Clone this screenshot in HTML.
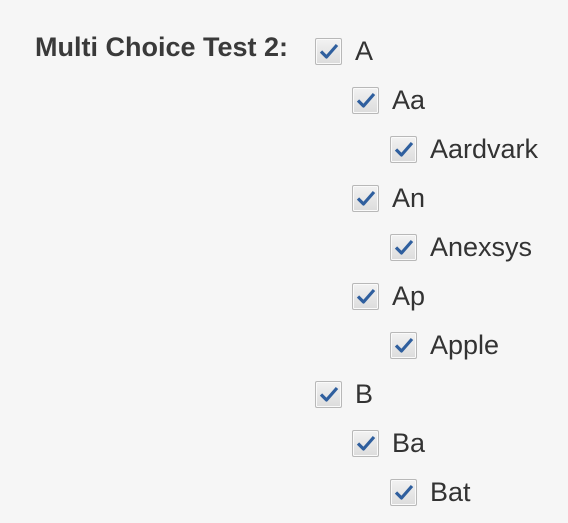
<!DOCTYPE html>
<html><head><style>
body{margin:0;background:#f6f6f6;width:568px;height:523px;overflow:hidden;font-family:"Liberation Sans",Arial,sans-serif;color:#333;position:relative}
.lbl{position:absolute;left:35px;top:32px;font-size:27px;font-weight:bold;color:#3a3a3a}
.row{position:absolute;height:30px;display:flex;align-items:center;font-size:27px;color:#333}
.cb{width:27px;height:27px;border:1px solid #b8b8b8;border-radius:2px;background:linear-gradient(#f2f2f2,#dcdcdc);margin-right:13px;box-sizing:border-box;display:flex;align-items:center;justify-content:center;box-shadow:inset 0 0 0 1px #fafafa}
</style></head><body>
<div class="lbl">Multi Choice Test 2:</div>
<div class="row" style="left:315px;top:36px"><span class="cb"><svg width="20" height="18" viewBox="0 0 20 18"><path d="M2 9.5 L7.5 15 L18 3" fill="none" stroke="#2f5f9e" stroke-width="3.2" stroke-linejoin="round"/></svg></span>A</div>
<div class="row" style="left:352px;top:85px"><span class="cb"><svg width="20" height="18" viewBox="0 0 20 18"><path d="M2 9.5 L7.5 15 L18 3" fill="none" stroke="#2f5f9e" stroke-width="3.2" stroke-linejoin="round"/></svg></span>Aa</div>
<div class="row" style="left:390px;top:134px"><span class="cb"><svg width="20" height="18" viewBox="0 0 20 18"><path d="M2 9.5 L7.5 15 L18 3" fill="none" stroke="#2f5f9e" stroke-width="3.2" stroke-linejoin="round"/></svg></span>Aardvark</div>
<div class="row" style="left:352px;top:183px"><span class="cb"><svg width="20" height="18" viewBox="0 0 20 18"><path d="M2 9.5 L7.5 15 L18 3" fill="none" stroke="#2f5f9e" stroke-width="3.2" stroke-linejoin="round"/></svg></span>An</div>
<div class="row" style="left:390px;top:232px"><span class="cb"><svg width="20" height="18" viewBox="0 0 20 18"><path d="M2 9.5 L7.5 15 L18 3" fill="none" stroke="#2f5f9e" stroke-width="3.2" stroke-linejoin="round"/></svg></span>Anexsys</div>
<div class="row" style="left:352px;top:281px"><span class="cb"><svg width="20" height="18" viewBox="0 0 20 18"><path d="M2 9.5 L7.5 15 L18 3" fill="none" stroke="#2f5f9e" stroke-width="3.2" stroke-linejoin="round"/></svg></span>Ap</div>
<div class="row" style="left:390px;top:330px"><span class="cb"><svg width="20" height="18" viewBox="0 0 20 18"><path d="M2 9.5 L7.5 15 L18 3" fill="none" stroke="#2f5f9e" stroke-width="3.2" stroke-linejoin="round"/></svg></span>Apple</div>
<div class="row" style="left:315px;top:379px"><span class="cb"><svg width="20" height="18" viewBox="0 0 20 18"><path d="M2 9.5 L7.5 15 L18 3" fill="none" stroke="#2f5f9e" stroke-width="3.2" stroke-linejoin="round"/></svg></span>B</div>
<div class="row" style="left:352px;top:428px"><span class="cb"><svg width="20" height="18" viewBox="0 0 20 18"><path d="M2 9.5 L7.5 15 L18 3" fill="none" stroke="#2f5f9e" stroke-width="3.2" stroke-linejoin="round"/></svg></span>Ba</div>
<div class="row" style="left:390px;top:477px"><span class="cb"><svg width="20" height="18" viewBox="0 0 20 18"><path d="M2 9.5 L7.5 15 L18 3" fill="none" stroke="#2f5f9e" stroke-width="3.2" stroke-linejoin="round"/></svg></span>Bat</div>
</body></html>
